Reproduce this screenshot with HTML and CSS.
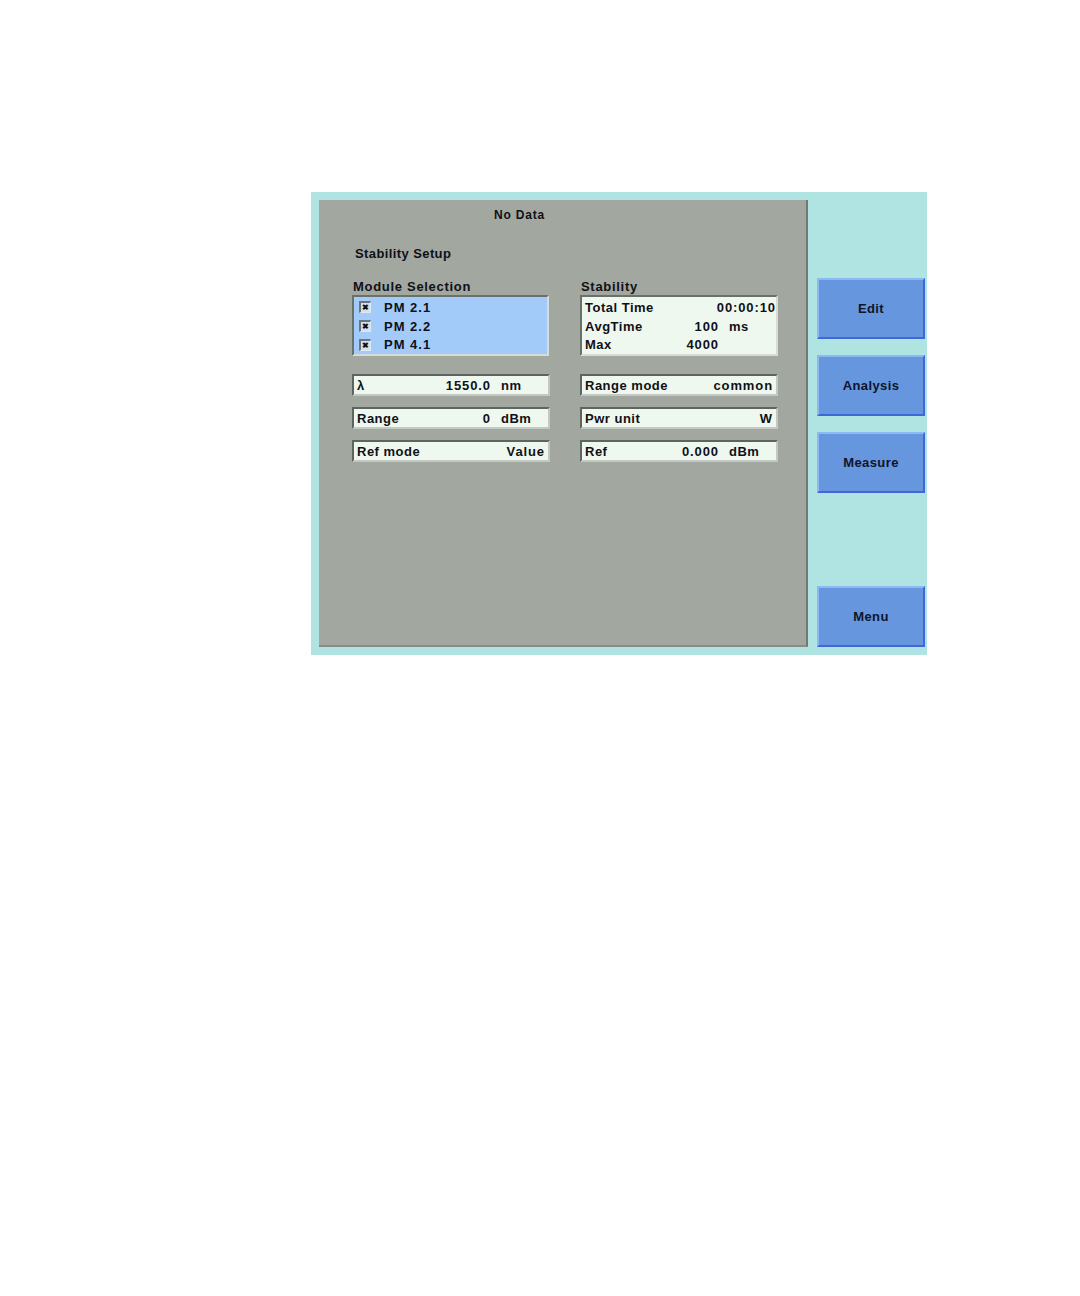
FILE: index.html
```html
<!DOCTYPE html>
<html>
<head>
<meta charset="utf-8">
<link rel="stylesheet" href="styles.css">
</head>
<body>
<div class="page">
  <div class="screen">
    <div class="panel">
      <div class="status">No Data</div>
      <div class="title">Stability Setup</div>
      <div class="grid">
        <div class="col">
          <div class="label">Module Selection</div>
          <div class="box sel">
            <div class="row"><span class="chk">&#x2716;</span><span class="mod">PM 2.1</span></div>
            <div class="row"><span class="chk">&#x2716;</span><span class="mod">PM 2.2</span></div>
            <div class="row"><span class="chk">&#x2716;</span><span class="mod">PM 4.1</span></div>
          </div>
          <div class="fields">
            <div class="field"><span class="name">λ</span><span class="val">1550.0</span><span class="unit">nm</span></div>
            <div class="field"><span class="name">Range</span><span class="val">0</span><span class="unit">dBm</span></div>
            <div class="field"><span class="name">Ref mode</span><span class="val">Value</span></div>
          </div>
        </div>
        <div class="col">
          <div class="label">Stability</div>
          <div class="box stab">
            <div class="row"><span class="name">Total Time</span><span class="val">00:00:10</span></div>
            <div class="row"><span class="name">AvgTime</span><span class="val">100</span><span class="unit">ms</span></div>
            <div class="row"><span class="name">Max</span><span class="val">4000</span><span class="unit"></span></div>
          </div>
          <div class="fields">
            <div class="field"><span class="name">Range mode</span><span class="val">common</span></div>
            <div class="field"><span class="name">Pwr unit</span><span class="val">W</span></div>
            <div class="field"><span class="name">Ref</span><span class="val">0.000</span><span class="unit">dBm</span></div>
          </div>
        </div>
      </div>
    </div>
    <div class="buttons">
      <div class="btn">Edit</div>
      <div class="btn">Analysis</div>
      <div class="btn">Measure</div>
      <div class="btn last">Menu</div>
    </div>
  </div>
</div>
</body>
</html>
```
FILE: styles.css
```css
html, body { margin: 0; padding: 0; background: #ffffff; }
body { font-family: "Liberation Sans", Arial, sans-serif; color: #101018; }
.page { padding: 192px 0 0 311px; }
.screen {
  width: 616px; height: 463px; box-sizing: border-box;
  background: #b0e4e2;
  padding: 8px 2px 8px 8px;
  display: flex; gap: 9px;
}
.panel {
  width: 489px; height: 447px; box-sizing: border-box;
  background: #a2a79f;
  border-right: 2px solid #727872;
  border-bottom: 2px solid #868c86;
  position: relative;
  font-size: 13px; font-weight: bold;
  letter-spacing: 0.5px;
}
.status { position: absolute; left: 175px; top: 8px; font-size: 12px; letter-spacing: 0.8px; }
.title { position: absolute; left: 36px; top: 46px; font-size: 13px; letter-spacing: 0.4px; }
.grid { display: flex; gap: 30px; padding: 79px 0 0 33px; }
.col { width: 198px; display: flex; flex-direction: column; }
.label { font-size: 13px; line-height: 16px; padding-left: 1px; letter-spacing: 0.7px; }
.box {
  height: 61px; box-sizing: border-box;
  border-top: 2px solid #6a706a; border-left: 2px solid #6a706a;
  border-right: 2px solid #d8dcd8; border-bottom: 2px solid #d8dcd8;
  display: flex; flex-direction: column; justify-content: space-between;
  padding: 1px 0 0 2px;
}
.sel { background: #a2cbfa; width: 197px; }
.stab { background: #eef8ee; }
.row { display: flex; align-items: center; height: 19px; }
.chk {
  width: 12px; height: 12px; box-sizing: border-box;
  border-top: 2px solid #6c7480; border-left: 2px solid #6c7480;
  border-right: 1px solid #e0e8f0; border-bottom: 1px solid #e0e8f0;
  background: #d4e0ee;
  font-size: 8px; line-height: 9px; text-align: center;
  margin-left: 3px; margin-right: 13px;
  color: #101018; letter-spacing: 0;
}
.mod { letter-spacing: 1px; }
.stab .row { padding-left: 1px; }
.stab .name { flex: 1; }
.stab .val { letter-spacing: 0.9px; }
.stab .unit { width: 57px; box-sizing: border-box; padding-left: 10px; }
.fields { display: flex; flex-direction: column; gap: 11px; margin-top: 18px; }
.field {
  height: 22px; box-sizing: border-box;
  background: #eef8ee;
  border-top: 2px solid #5e645e; border-left: 2px solid #5e645e;
  border-right: 2px solid #c4c8c4; border-bottom: 2px solid #c4c8c4;
  display: flex; align-items: center;
  padding: 0 3px 0 3px;
}
.field .name { flex: 1; }
.field .val { letter-spacing: 0.9px; }
.field .unit { width: 54px; box-sizing: border-box; padding-left: 10px; }
.buttons {
  width: 108px; display: flex; flex-direction: column; gap: 16px;
  padding-top: 78px;
}
.btn {
  height: 61px; box-sizing: border-box;
  background: #6596de;
  border-top: 2px solid #8eb8f4; border-left: 2px solid #8eb8f4;
  border-right: 2px solid #4066d8; border-bottom: 2px solid #4066d8;
  display: flex; align-items: center; justify-content: center;
  font-size: 13px; font-weight: bold; color: #10142a; letter-spacing: 0.4px;
}
.btn.last { margin-top: auto; }
```
